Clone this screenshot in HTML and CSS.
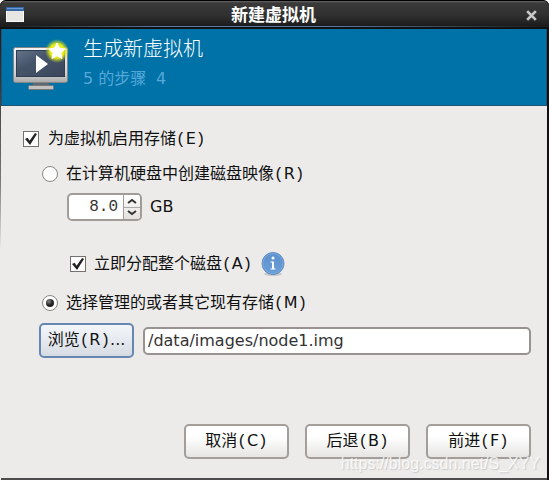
FILE: index.html
```
<!DOCTYPE html>
<html lang="zh-CN">
<head>
<meta charset="utf-8">
<meta name="viewport" content="width=device-width, initial-scale=1">
<title>新建虚拟机</title>
<link rel="stylesheet" href="styles.css">
</head>
<body>
<main class="window">
  <header class="titlebar">
    <svg class="app-icon" viewBox="0 0 18 16" aria-hidden="true">
      <rect x=".5" y=".5" width="17" height="14" fill="#e6e6e2" stroke="#fafafa"/>
      <rect x="0" y="0" width="18" height="4" fill="#3566a8"/>
      <rect x="1" y="1" width="16" height="1" fill="#6f9bd1"/>
    </svg>
    <h1 class="title">新建虚拟机</h1>
    <button class="close" type="button" aria-label="关闭">
      <svg viewBox="0 0 12 12" aria-hidden="true"><path d="M2 2l8 8M10 2l-8 8" stroke="#c9c9c9" stroke-width="2.500"/></svg>
    </button>
  </header>
  <section class="banner">
    <svg class="monitor" viewBox="0 0 60 54" aria-hidden="true">
      <defs>
        <linearGradient id="frame" x1="0" y1="0" x2="0" y2="1"><stop offset="0" stop-color="#f4f4f4"/><stop offset=".75" stop-color="#d0d0d0"/><stop offset="1" stop-color="#aaa"/></linearGradient>
        <linearGradient id="screen" x1="0" y1="0" x2="1" y2="1"><stop offset="0" stop-color="#64748a"/><stop offset=".4" stop-color="#46546a"/><stop offset="1" stop-color="#3a465a"/></linearGradient>
        <radialGradient id="glow"><stop offset="0" stop-color="#f6f76a"/><stop offset=".6" stop-color="#e5eb12"/><stop offset="1" stop-color="#b4cd38" stop-opacity="0"/></radialGradient>
      </defs>
      <path d="M23 43h14l2 5H21z" fill="#5f6973"/>
      <rect x="17.500" y="47.500" width="25" height="4" rx="1" fill="#c2c2c2" stroke="#777"/>
      <rect x="2.500" y="9.500" width="54" height="35" rx="2" fill="url(#frame)" stroke="#858585"/>
      <rect x="5.500" y="12.500" width="48" height="26" fill="url(#screen)" stroke="#303c50"/>
      <path d="M25 17v18l12-9z" fill="#fff"/>
      <circle cx="46" cy="13" r="12" fill="url(#glow)"/>
      <path d="M46 5l2.400 5.200 5.700.700-4.200 3.900 1.100 5.700-5-2.800-5 2.800 1.100-5.700-4.200-3.900 5.700-.700z" fill="#fff" stroke="#fff" stroke-linejoin="round"/>
    </svg>
    <div>
      <h2 class="heading">生成新虚拟机</h2>
      <p class="step">5 的步骤<span class="half"> </span>4</p>
    </div>
  </section>
  <form class="content">
    <label class="row enable"><input class="check" type="checkbox" checked><span>为虚拟机启用存储<span class="half">(</span>E<span class="half">)</span></span></label>
    <label class="row create"><input class="radio" type="radio" name="storage"><span>在计算机硬盘中创建磁盘映像<span class="half">(</span>R<span class="half">)</span></span></label>
    <div class="size">
      <div class="spin">
        <input class="amount" type="text" value="8.0" aria-label="磁盘大小">
        <div class="steppers">
          <button type="button" aria-label="增加"><svg viewBox="0 0 10 6"><path d="M1 5l4-3 4 3" fill="none" stroke="#333" stroke-width="2"/></svg></button>
          <button type="button" aria-label="减少"><svg viewBox="0 0 10 6"><path d="M1 1l4 3 4-3" fill="none" stroke="#333" stroke-width="2"/></svg></button>
        </div>
      </div>
      <span class="unit">GB</span>
    </div>
    <div class="row allocate">
      <label class="row"><input class="check" type="checkbox" checked><span>立即分配整个磁盘<span class="half">(</span>A<span class="half">)</span></span></label>
      <svg class="info" viewBox="0 0 26 26" role="img" aria-label="信息">
        <defs><linearGradient id="blue" x1="0" y1="0" x2="0" y2="1"><stop offset="0" stop-color="#5d8fcb"/><stop offset="1" stop-color="#6b9fd8"/></linearGradient></defs>
        <ellipse cx="13" cy="23" rx="9" ry="2" fill="#c9c9c8"/>
        <circle cx="13" cy="12.500" r="11" fill="url(#blue)" stroke="#5d8bc2"/>
        <circle cx="13" cy="12.500" r="10" fill="none" stroke="#7ba8da"/>
        <circle cx="13" cy="7" r="1.500" fill="#fff"/>
        <path d="M10.500 10.500h3.500v7h1.500v1h-5v-1h1.500v-6h-1.500z" fill="#fff"/>
      </svg>
    </div>
    <label class="row existing"><input class="radio" type="radio" name="storage" checked><span>选择管理的或者其它现有存储<span class="half">(</span>M<span class="half">)</span></span></label>
    <div class="browse-row">
      <button class="button browse" type="button">浏览<span class="half">(</span>R<span class="half">)</span>...</button>
      <input class="path" type="text" value="/data/images/node1.img" aria-label="存储路径">
    </div>
    <footer class="actions">
      <button class="button" type="button">取消<span class="half">(</span>C<span class="half">)</span></button>
      <button class="button" type="button">后退<span class="half">(</span>B<span class="half">)</span></button>
      <button class="button" type="button">前进<span class="half">(</span>F<span class="half">)</span></button>
    </footer>
  </form>
  <div class="watermark">https://blog.csdn.net/S_XYY</div>
</main>
</body>
</html>
```
FILE: styles.css
```
* {
  box-sizing: border-box;
}

body {
  margin: 0;
  background: #fff;
  color: #111;
  font: 16px/24px "DejaVu Sans", "Noto Sans CJK SC", sans-serif;
}

button,
input {
  margin: 0;
  color: inherit;
  font: inherit;
}

h1,
h2,
p {
  margin: 0;
  font-weight: 400;
}

svg {
  display: block;
}

.window {
  position: relative;
  display: flex;
  flex-direction: column;
  min-height: calc(100vh - 2px);
  padding: 0 2px 2px 1px;
  border-radius: 6px 6px 0 0;
  background: linear-gradient(#111 0, #333 80px, #777 180px, #ecebea 250px) left / 1px 100% no-repeat, linear-gradient(#111, #111) right / 2px 100% no-repeat, #4d4b4b;
}

.titlebar {
  display: flex;
  align-items: center;
  height: 29px;
  margin: 0 -2px 0 -1px;
  padding: 2px 9px 0 6px;
  border-top: 1px solid #000;
  border-bottom: 2px solid #111;
  border-radius: 6px 6px 0 0;
  background: linear-gradient(90deg, transparent, #5b7ba5 30%, #5b7ba5 60%, transparent) bottom / 100% 1px no-repeat, linear-gradient(#666 0, #3a3a3a 2px, #303030 55%, #1a1a1a);
}

.app-icon {
  width: 18px;
  height: 16px;
}

.title {
  flex: 1;
  color: #fff;
  font-size: 17px;
  font-weight: 700;
  line-height: 24px;
  text-align: center;
}

.close {
  padding: 2px;
  border: 0;
  background: none;
}

.close svg {
  width: 13px;
  height: 13px;
}

.banner {
  display: flex;
  gap: 12px;
  height: 77px;
  padding: 5px 9px;
  border: 1px solid #1b5475;
  border-width: 0 1px 1px;
  background: #0072a8;
}

.monitor {
  flex: none;
  width: 60px;
  height: 54px;
  margin-top: 4px;
}

.heading {
  color: #fff;
  font-size: 20px;
  font-weight: 300;
  line-height: 30px;
}

.step {
  color: #55a8d8;
  line-height: 30px;
}

.half {
  font-family: "Liberation Mono", monospace;
  font-size: 16px;
}

.content {
  display: flex;
  flex: 1;
  flex-direction: column;
  padding: 21px 16px 19px 22px;
  background: #ecebea;
}

.row {
  display: flex;
  align-items: center;
  gap: 8px;
  height: 24px;
}

.create,
.existing {
  margin-left: 19px;
}

.enable {
  gap: 9px;
}

.create {
  margin-top: 11px;
}

.existing {
  margin-top: 15px;
}

.check,
.radio {
  flex: none;
  display: grid;
  place-items: center;
  width: 16px;
  height: 16px;
  border: 1px solid #77716d;
  background: #fff;
  appearance: none;
}

.check:checked::before {
  width: 12px;
  height: 12px;
  background: #222;
  clip-path: polygon(0 50%, 22% 40%, 38% 64%, 84% 0, 100% 8%, 42% 100%);
  content: "";
}

.radio {
  border-color: #8b8682;
  border-radius: 50%;
}

.radio:checked::before {
  width: 8px;
  height: 8px;
  border-radius: 50%;
  background: radial-gradient(circle at 35% 30%, #888, #222 50%);
  content: "";
}

.size {
  display: flex;
  align-items: center;
  gap: 8px;
  margin: 7px 0 0 44px;
}

.spin {
  display: flex;
  width: 75px;
  height: 28px;
  overflow: hidden;
  border: 2px solid #a19c98;
  border-radius: 5px;
  background: #fff;
}

.amount {
  flex: 1;
  min-width: 0;
  padding: 0 5px;
  border: 0;
  background: none;
  color: #333;
  font-family: "Liberation Mono", monospace;
  text-align: right;
}

.steppers {
  display: flex;
  flex-direction: column;
  width: 17px;
  border-left: 1px solid #a19c98;
  background: linear-gradient(#fff, #e2e1df);
}

.steppers button {
  display: grid;
  flex: 1;
  place-items: center;
  padding: 0;
  border: 0;
  background: none;
}

.steppers button + button {
  border-top: 1px solid #aaa;
}

.steppers svg {
  width: 10px;
  height: 6px;
}

.allocate {
  margin: 31px 0 0 47px;
}

.info {
  width: 26px;
  height: 26px;
}

.browse-row {
  display: flex;
  align-items: center;
  gap: 9px;
  margin: 8px 0 0 16px;
}

.button {
  min-width: 105px;
  height: 35px;
  padding: 0 6px;
  border: 2px solid #a39e9a;
  border-radius: 5px;
  background: linear-gradient(#fff 35%, #e6e5e3);
}

.browse {
  min-width: 95px;
  padding: 0 4px;
  border-color: #6687b1;
  background: linear-gradient(#f3f5f9, #e4e8ee 55%, #d6dbe2);
  white-space: nowrap;
}

.path {
  flex: 1;
  min-width: 0;
  height: 28px;
  padding: 0 3px;
  border: 2px solid #989390;
  border-radius: 5px;
  background: #fff;
  color: #333;
}

.actions {
  display: flex;
  justify-content: flex-end;
  gap: 16px;
  margin-top: auto;
}

.watermark {
  position: absolute;
  right: 9px;
  bottom: 5px;
  color: #fffc;
  font: 16px/22px "Liberation Sans", sans-serif;
  text-shadow: 1px 1px 1px #9996;
  pointer-events: none;
}
```
